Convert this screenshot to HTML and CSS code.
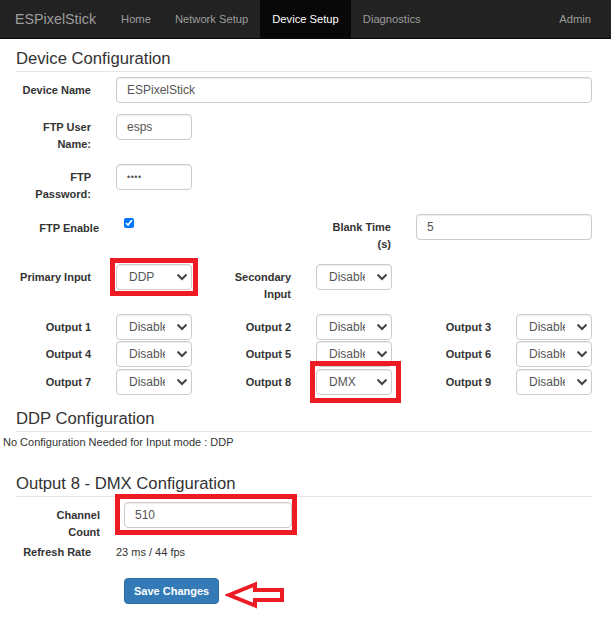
FILE: index.html
```html
<!DOCTYPE html>
<html lang="en">
<head>
<meta charset="utf-8">
<title>ESPixelStick - Device Setup</title>
<link rel="stylesheet" href="styles.css">
</head>
<body>
<nav class="navbar">
  <a class="brand">ESPixelStick</a>
  <ul class="nav">
    <li><a>Home</a></li>
    <li><a>Network Setup</a></li>
    <li class="active"><a>Device Setup</a></li>
    <li><a>Diagnostics</a></li>
  </ul>
  <ul class="nav nav-right">
    <li><a>Admin</a></li>
  </ul>
</nav>

<main class="page">
  <h2 class="section-title">Device Configuration</h2>

  <div class="form-top">
    <div class="row">
      <div class="cell">
        <label class="lbl">Device Name</label>
        <input class="ctl grow" type="text" value="ESPixelStick">
      </div>
    </div>
    <div class="row">
      <div class="cell">
        <label class="lbl">FTP User Name:</label>
        <input class="ctl short" type="text" value="esps">
      </div>
    </div>
    <div class="row">
      <div class="cell">
        <label class="lbl">FTP Password:</label>
        <input class="ctl short pw" type="password" value="esps">
      </div>
    </div>
    <div class="row two">
      <div class="cell">
        <label class="lbl lbl-shift">FTP Enable</label>
        <input class="chk" type="checkbox" checked>
      </div>
      <div class="cell">
        <label class="lbl">Blank Time (s)</label>
        <input class="ctl grow" type="text" value="5">
      </div>
    </div>
    <div class="row three">
      <div class="cell">
        <label class="lbl">Primary Input</label>
        <span class="sel mark mark-primary"><select><option>DDP</option></select><svg class="chev" viewBox="0 0 10 7" width="10" height="7"><path d="M1.2 1.3 L5 5.1 L8.8 1.3"/></svg></span>
      </div>
      <div class="cell">
        <label class="lbl">Secondary Input</label>
        <span class="sel"><select><option>Disabled</option></select><svg class="chev" viewBox="0 0 10 7" width="10" height="7"><path d="M1.2 1.3 L5 5.1 L8.8 1.3"/></svg></span>
      </div>
    </div>

    <div class="outputs">
      <div class="cell"><label class="lbl">Output 1</label><span class="sel"><select><option>Disabled</option></select><svg class="chev" viewBox="0 0 10 7" width="10" height="7"><path d="M1.2 1.3 L5 5.1 L8.8 1.3"/></svg></span></div>
      <div class="cell"><label class="lbl">Output 2</label><span class="sel"><select><option>Disabled</option></select><svg class="chev" viewBox="0 0 10 7" width="10" height="7"><path d="M1.2 1.3 L5 5.1 L8.8 1.3"/></svg></span></div>
      <div class="cell"><label class="lbl">Output 3</label><span class="sel"><select><option>Disabled</option></select><svg class="chev" viewBox="0 0 10 7" width="10" height="7"><path d="M1.2 1.3 L5 5.1 L8.8 1.3"/></svg></span></div>
      <div class="cell"><label class="lbl">Output 4</label><span class="sel"><select><option>Disabled</option></select><svg class="chev" viewBox="0 0 10 7" width="10" height="7"><path d="M1.2 1.3 L5 5.1 L8.8 1.3"/></svg></span></div>
      <div class="cell"><label class="lbl">Output 5</label><span class="sel"><select><option>Disabled</option></select><svg class="chev" viewBox="0 0 10 7" width="10" height="7"><path d="M1.2 1.3 L5 5.1 L8.8 1.3"/></svg></span></div>
      <div class="cell"><label class="lbl">Output 6</label><span class="sel"><select><option>Disabled</option></select><svg class="chev" viewBox="0 0 10 7" width="10" height="7"><path d="M1.2 1.3 L5 5.1 L8.8 1.3"/></svg></span></div>
      <div class="cell"><label class="lbl">Output 7</label><span class="sel"><select><option>Disabled</option></select><svg class="chev" viewBox="0 0 10 7" width="10" height="7"><path d="M1.2 1.3 L5 5.1 L8.8 1.3"/></svg></span></div>
      <div class="cell"><label class="lbl">Output 8</label><span class="sel mark mark-out8"><select><option>DMX</option></select><svg class="chev" viewBox="0 0 10 7" width="10" height="7"><path d="M1.2 1.3 L5 5.1 L8.8 1.3"/></svg></span></div>
      <div class="cell"><label class="lbl">Output 9</label><span class="sel"><select><option>Disabled</option></select><svg class="chev" viewBox="0 0 10 7" width="10" height="7"><path d="M1.2 1.3 L5 5.1 L8.8 1.3"/></svg></span></div>
    </div>
  </div>

  <h2 class="section-title ddp-title">DDP Configuration</h2>
  <p class="note">No Configuration Needed for Input mode : DDP</p>

  <h2 class="section-title dmx-title">Output 8 - DMX Configuration</h2>
  <div class="form-bottom">
    <div class="cell">
      <label class="lbl lbl-b">Channel Count</label>
      <span class="mark mark-channel"><input class="ctl channel" type="text" value="510"></span>
    </div>
    <div class="cell refresh">
      <label class="lbl lbl-inline">Refresh Rate</label>
      <span class="value">23 ms / 44 fps</span>
    </div>
    <div class="actions">
      <button class="btn-primary" type="button">Save Changes</button>
      <svg class="arrow" viewBox="0 0 62 30" width="62" height="30"><polygon points="4,15 30,4.5 30,10 57,10 57,20 30,20 30,25.5"/></svg>
    </div>
  </div>
</main>
</body>
</html>
```
FILE: styles.css
```css
* { box-sizing: border-box; }

html, body {
  margin: 0;
  padding: 0;
  background: #fff;
}

body {
  font-family: "Liberation Sans", Arial, sans-serif;
  color: #333;
  font-size: 11px;
}

/* ---------- navbar ---------- */
.navbar {
  display: flex;
  align-items: stretch;
  height: 39px;
  background: #222;
  border-bottom: 1px solid #080808;
}

.brand {
  padding: 0 13px 0 15px;
  font-size: 14.3px;
  line-height: 38px;
  color: #9d9d9d;
}

.nav {
  display: flex;
  list-style: none;
  margin: 0;
  padding: 0;
}

.nav a {
  display: block;
  padding: 0 12px;
  font-size: 11.2px;
  line-height: 38px;
  color: #9d9d9d;
}

.nav .active a {
  background: #080808;
  color: #fff;
}

.nav-right {
  margin-left: auto;
  padding-right: 8px;
}

/* ---------- page ---------- */
.page {
  width: 592px;
}

.section-title {
  margin: 9.5px 0 0 16px;
  padding-bottom: 2px;
  font-size: 16.67px;
  font-weight: normal;
  line-height: 20px;
  color: #333;
  border-bottom: 1px solid #e5e5e5;
}

.ddp-title { margin-top: 14px; }
.dmx-title { margin-top: 23px; }

.form-top { margin-top: 5px; }

.row {
  margin-bottom: 11px;
}

.row.two {
  display: grid;
  grid-template-columns: 300px 292px;
}

.row.three {
  display: grid;
  grid-template-columns: 200px 200px 192px;
}

.cell {
  display: flex;
  align-items: flex-start;
}

.lbl {
  flex: 0 0 73px;
  margin: 0 25px 0 18px;
  padding-top: 5px;
  text-align: right;
  font-size: 11px;
  font-weight: bold;
  line-height: 17px;
  color: #333;
}

.lbl-shift {
  margin: 0 17px 0 26px;
  padding-top: 6px;
}

/* ---------- controls ---------- */
.ctl {
  height: 26px;
  border: 1px solid #ccc;
  border-radius: 4px;
  padding: 0 10px;
  font-family: "Liberation Sans", Arial, sans-serif;
  font-size: 12px;
  color: #555;
  background: #fff;
  box-shadow: inset 0 1px 1px rgba(0, 0, 0, 0.075);
  outline: none;
}

.grow { flex: 1 1 auto; min-width: 0; }
.short { width: 76px; }
.pw { font-size: 9px; letter-spacing: 0.5px; }

.chk {
  width: 10px;
  height: 10px;
  margin: 4px 0 0 8px;
}

.sel {
  position: relative;
  display: inline-block;
  width: 76px;
  height: 26px;
}

.sel select {
  -webkit-appearance: none;
  appearance: none;
  width: 76px;
  height: 26px;
  border: 1px solid #ccc;
  border-radius: 4px;
  padding: 0 26px 0 12px;
  font-family: "Liberation Sans", Arial, sans-serif;
  font-size: 12px;
  color: #555;
  background: #fff;
  box-shadow: inset 0 1px 1px rgba(0, 0, 0, 0.075);
  outline: none;
}

.chev {
  position: absolute;
  right: 5px;
  top: 10px;
  pointer-events: none;
}

.chev path {
  fill: none;
  stroke: #444;
  stroke-width: 2.1;
  stroke-linecap: square;
}

.outputs {
  display: grid;
  grid-template-columns: 200px 200px 192px;
  row-gap: 1.5px;
}

/* ---------- annotations (red boxes) ---------- */
.mark { position: relative; display: inline-block; }

.mark::after {
  content: "";
  position: absolute;
  border: 5px solid #ed1c24;
  pointer-events: none;
}

.mark-primary::after { left: -6px; right: -6px; top: -6px; bottom: -6px; }
.mark-out8::after { left: -6px; right: -9px; top: -8px; bottom: -8px; }
.mark-channel::after { left: -9px; right: -5px; top: -8px; bottom: -7px; }

/* ---------- DDP note ---------- */
.note {
  margin: 2px 0 0 3px;
  font-size: 11px;
  line-height: 17px;
  color: #333;
}

/* ---------- bottom form ---------- */
.form-bottom { margin-top: 5px; }

.lbl-b {
  flex: 0 0 78px;
  margin: 0 24px 0 22px;
}

.channel {
  display: block;
  width: 168px;
}

.refresh { margin-top: 3px; }

.lbl-inline { padding-top: 0; }

.value {
  font-size: 11px;
  line-height: 17px;
  color: #333;
}

.actions {
  display: flex;
  align-items: flex-start;
  margin: 17.5px 0 0 124px;
}

.btn-primary {
  height: 26px;
  padding: 0 9px;
  border: 1px solid #2e6da4;
  border-radius: 4px;
  background: #337ab7;
  color: #fff;
  font-family: "Liberation Sans", Arial, sans-serif;
  font-size: 11px;
  font-weight: bold;
}

.arrow {
  margin: 2px 0 0 6px;
}

.arrow polygon {
  fill: #fff;
  stroke: #ed1c24;
  stroke-width: 4;
  stroke-linejoin: miter;
}
```
